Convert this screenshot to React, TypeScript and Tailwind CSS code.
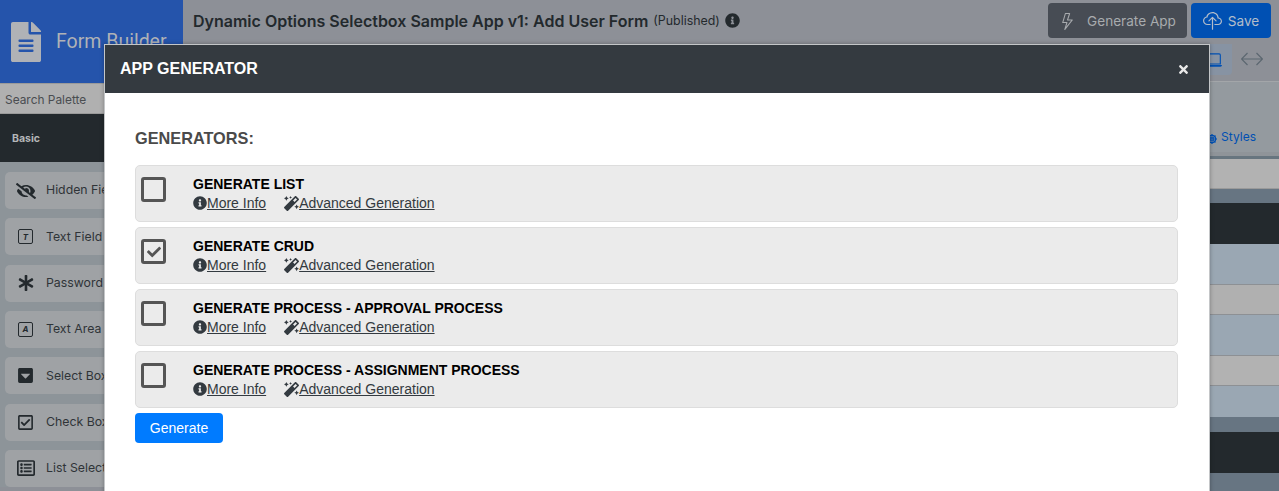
import { ReactNode } from "react";
import { FaAsterisk, FaCaretSquareDown, FaDharmachakra, FaEyeSlash, FaFileAlt, FaInfoCircle, FaMagic, FaRegCheckSquare, FaRegListAlt, FaTimes, FaCheck } from "react-icons/fa";
import { BsCloudUpload, BsLaptop, BsLightning } from "react-icons/bs";

const palette: { label: string; icon: ReactNode }[] = [
  { label: "Hidden Field", icon: <FaEyeSlash className="text-[20px]" /> },
  { label: "Text Field", icon: <LetterBox letter="T" /> },
  { label: "Password", icon: <FaAsterisk className="text-[16px]" /> },
  { label: "Text Area", icon: <LetterBox letter="A" /> },
  { label: "Select Box", icon: <FaCaretSquareDown className="text-[17px]" /> },
  { label: "Check Box", icon: <FaRegCheckSquare className="text-[17px]" /> },
  { label: "List Select", icon: <FaRegListAlt className="text-[18px]" /> },
];

const generators = [
  { name: "GENERATE LIST", checked: false },
  { name: "GENERATE CRUD", checked: true },
  { name: "GENERATE PROCESS - APPROVAL PROCESS", checked: false },
  { name: "GENERATE PROCESS - ASSIGNMENT PROCESS", checked: false },
];

const stripes = [
  "h-[4px] bg-[#8f9499]",
  "h-[3px] bg-[#67757f]",
  "h-[30px] bg-[#b2b2b2] border-b border-[#9a9a9a]",
  "h-[14px] bg-[#677582]",
  "h-[41px] bg-[#23292d]",
  "h-[41px] bg-[#9aa7b3] border-b border-[#8d9094]",
  "h-[30px] bg-[#b0b0b0] border-b border-[#8d9094]",
  "h-[41px] bg-[#9aa7b3] border-b border-[#8d9094]",
  "h-[30px] bg-[#b2b2b2] border-b border-[#8d9094]",
  "h-[31px] bg-[#9aa7b3]",
  "h-[15px] bg-[#677582]",
  "h-[41px] bg-[#23292d]",
  "h-[18px] bg-[#677582]",
];

function LetterBox({ letter }: { letter: string }) {
  return (
    <span className="flex h-[15px] w-[15px] items-center justify-center rounded-[2px] border border-[#23292d] text-[8px] font-bold italic leading-none">
      {letter}
    </span>
  );
}

function GeneratorRow({ name, checked }: { name: string; checked: boolean }) {
  return (
    <div className="flex h-[57px] rounded-[5px] border border-[#dddddd] bg-[#ebebeb] pl-[5px] pt-[11px]">
      <span className="flex h-[25px] w-[25px] items-center justify-center rounded-[3px] border-[3px] border-[#555555] text-[#555555]">
        {checked && <FaCheck className="text-[14px]" />}
      </span>
      <div className="ml-[27px]">
        <div className="-mt-[3px] text-[14px] font-bold leading-[20px] text-black">{name}</div>
        <div className="flex text-[14px] leading-[18px] text-[#333a40]">
          <span className="flex items-center">
            <FaInfoCircle className="text-[14px]" />
            <span className="underline">More Info</span>
          </span>
          <span className="ml-[18px] flex items-center">
            <FaMagic className="text-[15px]" />
            <span className="underline">Advanced Generation</span>
          </span>
        </div>
      </div>
    </div>
  );
}

export default function App() {
  return (
    <div className="relative flex h-[491px] w-[1279px] overflow-hidden bg-[#8d9097] font-['Inter',sans-serif]">
      <aside className="flex w-[183px] shrink-0 flex-col">
        <div className="flex h-[83px] items-center bg-[#2554ab] pl-[6px] text-[#b0b2b6]">
          <FaFileAlt className="text-[40px]" />
          <span className="ml-[10px] font-['Roboto',sans-serif] text-[19.5px]">Form Builder</span>
        </div>
        <div className="flex h-[31px] items-center border-y border-[#9a9a9a] bg-[#b0b0b0] pl-[5px] pt-[2px] text-[11.9px] text-[#4a4d50]">
          Search Palette
        </div>
        <div className="flex h-[48px] items-center bg-[#23292d] pl-[12px] pt-[1px] text-[10.5px] font-bold text-[#b4b6b8]">Basic</div>
        <div className="flex flex-col gap-[9.33px] bg-[#8d9499] pl-[5px] pt-[10px]">
          {palette.map((p) => (
            <div key={p.label} className="flex h-[37px] w-[170px] items-center rounded-[5px] bg-[#9fa2a5] text-[12.3px] text-[#2f3438]">
              <span className="flex w-[41px] justify-center text-[#23292d]">{p.icon}</span>
              {p.label}
            </div>
          ))}
        </div>
      </aside>

      <main className="flex min-w-0 flex-1 flex-col">
        <header className="flex h-[45px] items-start pl-[10px]">
          <div className="flex h-[41px] items-center text-[#23292d]">
            <span className="text-[16px] font-semibold">Dynamic Options Selectbox Sample App v1: Add User Form</span>
            <span className="ml-[5px] mt-[2px] text-[12.4px]">(Published)</span>
            <FaInfoCircle className="ml-[5px] text-[15px]" />
          </div>
          <div className="ml-auto mr-[8px] mt-[3px] flex gap-[4px] text-[13.6px]">
            <button className="flex h-[35px] w-[139px] items-center justify-center gap-[11px] rounded-[4px] bg-[#474c54] pt-[1px] text-[#a8abae]">
              <BsLightning className="text-[17px]" />
              Generate App
            </button>
            <button className="flex h-[35px] w-[80px] items-center justify-center gap-[6px] rounded-[4px] bg-[#0050b3] pt-[1px] text-[#b3bdca]">
              <BsCloudUpload className="text-[19px]" />
              Save
            </button>
          </div>
        </header>
        <div className="flex h-[38px] items-start justify-end border-b border-[#a3a6a9] pr-[16px]">
          <span className="flex h-[31px] w-[22px] items-center justify-end rounded-br-[4px] bg-[#8793a3] pr-[10px] text-[#0050b3]">
            <BsLaptop className="shrink-0 text-[18px]" />
          </span>
          <svg className="ml-[9px] mt-[8px] h-[14px] w-[22px] text-[#5b6770]" viewBox="0 0 22 14" fill="none" stroke="currentColor" strokeWidth="1.2">
            <path d="M0.5 7h21M6.5 1L0.5 7l6 6M15.5 1l6 6-6 6" />
          </svg>
        </div>
        <div className="flex h-[71px] items-end justify-end gap-[4px] bg-[#949a9f] pb-[6px] pr-[23px] text-[12px] text-[#0050b3]">
          <FaDharmachakra className="mb-[2px] text-[10px]" />
          Styles
        </div>
        <div className="flex flex-col">
          {stripes.map((s, i) => (
            <div key={i} className={s} />
          ))}
        </div>
      </main>

      <div className="absolute left-[104px] top-[44px] h-[460px] w-[1106px] border border-[#c4c6c8] bg-white font-['Liberation_Sans',sans-serif] shadow-[0_0_4px_rgba(0,0,0,0.3)]">
        <div className="flex h-[48px] items-center justify-between bg-[#343a40] pl-[15px] pr-[19px] text-white">
          <span className="text-[16px] font-bold">APP GENERATOR</span>
          <FaTimes className="text-[13px] text-[#e8e8e8]" />
        </div>
        <div className="px-[30px] pt-[35px]">
          <h2 className="text-[16.3px] font-bold leading-[20px] text-[#4a4a4a]">GENERATORS:</h2>
          <div className="mt-[17px] flex w-[1043px] flex-col gap-[5px]">
            {generators.map((g) => (
              <GeneratorRow key={g.name} name={g.name} checked={g.checked} />
            ))}
          </div>
          <button className="mt-[5px] h-[30px] w-[88px] rounded-[4px] bg-[#007bff] text-[14px] text-white">Generate</button>
        </div>
      </div>
    </div>
  );
}
